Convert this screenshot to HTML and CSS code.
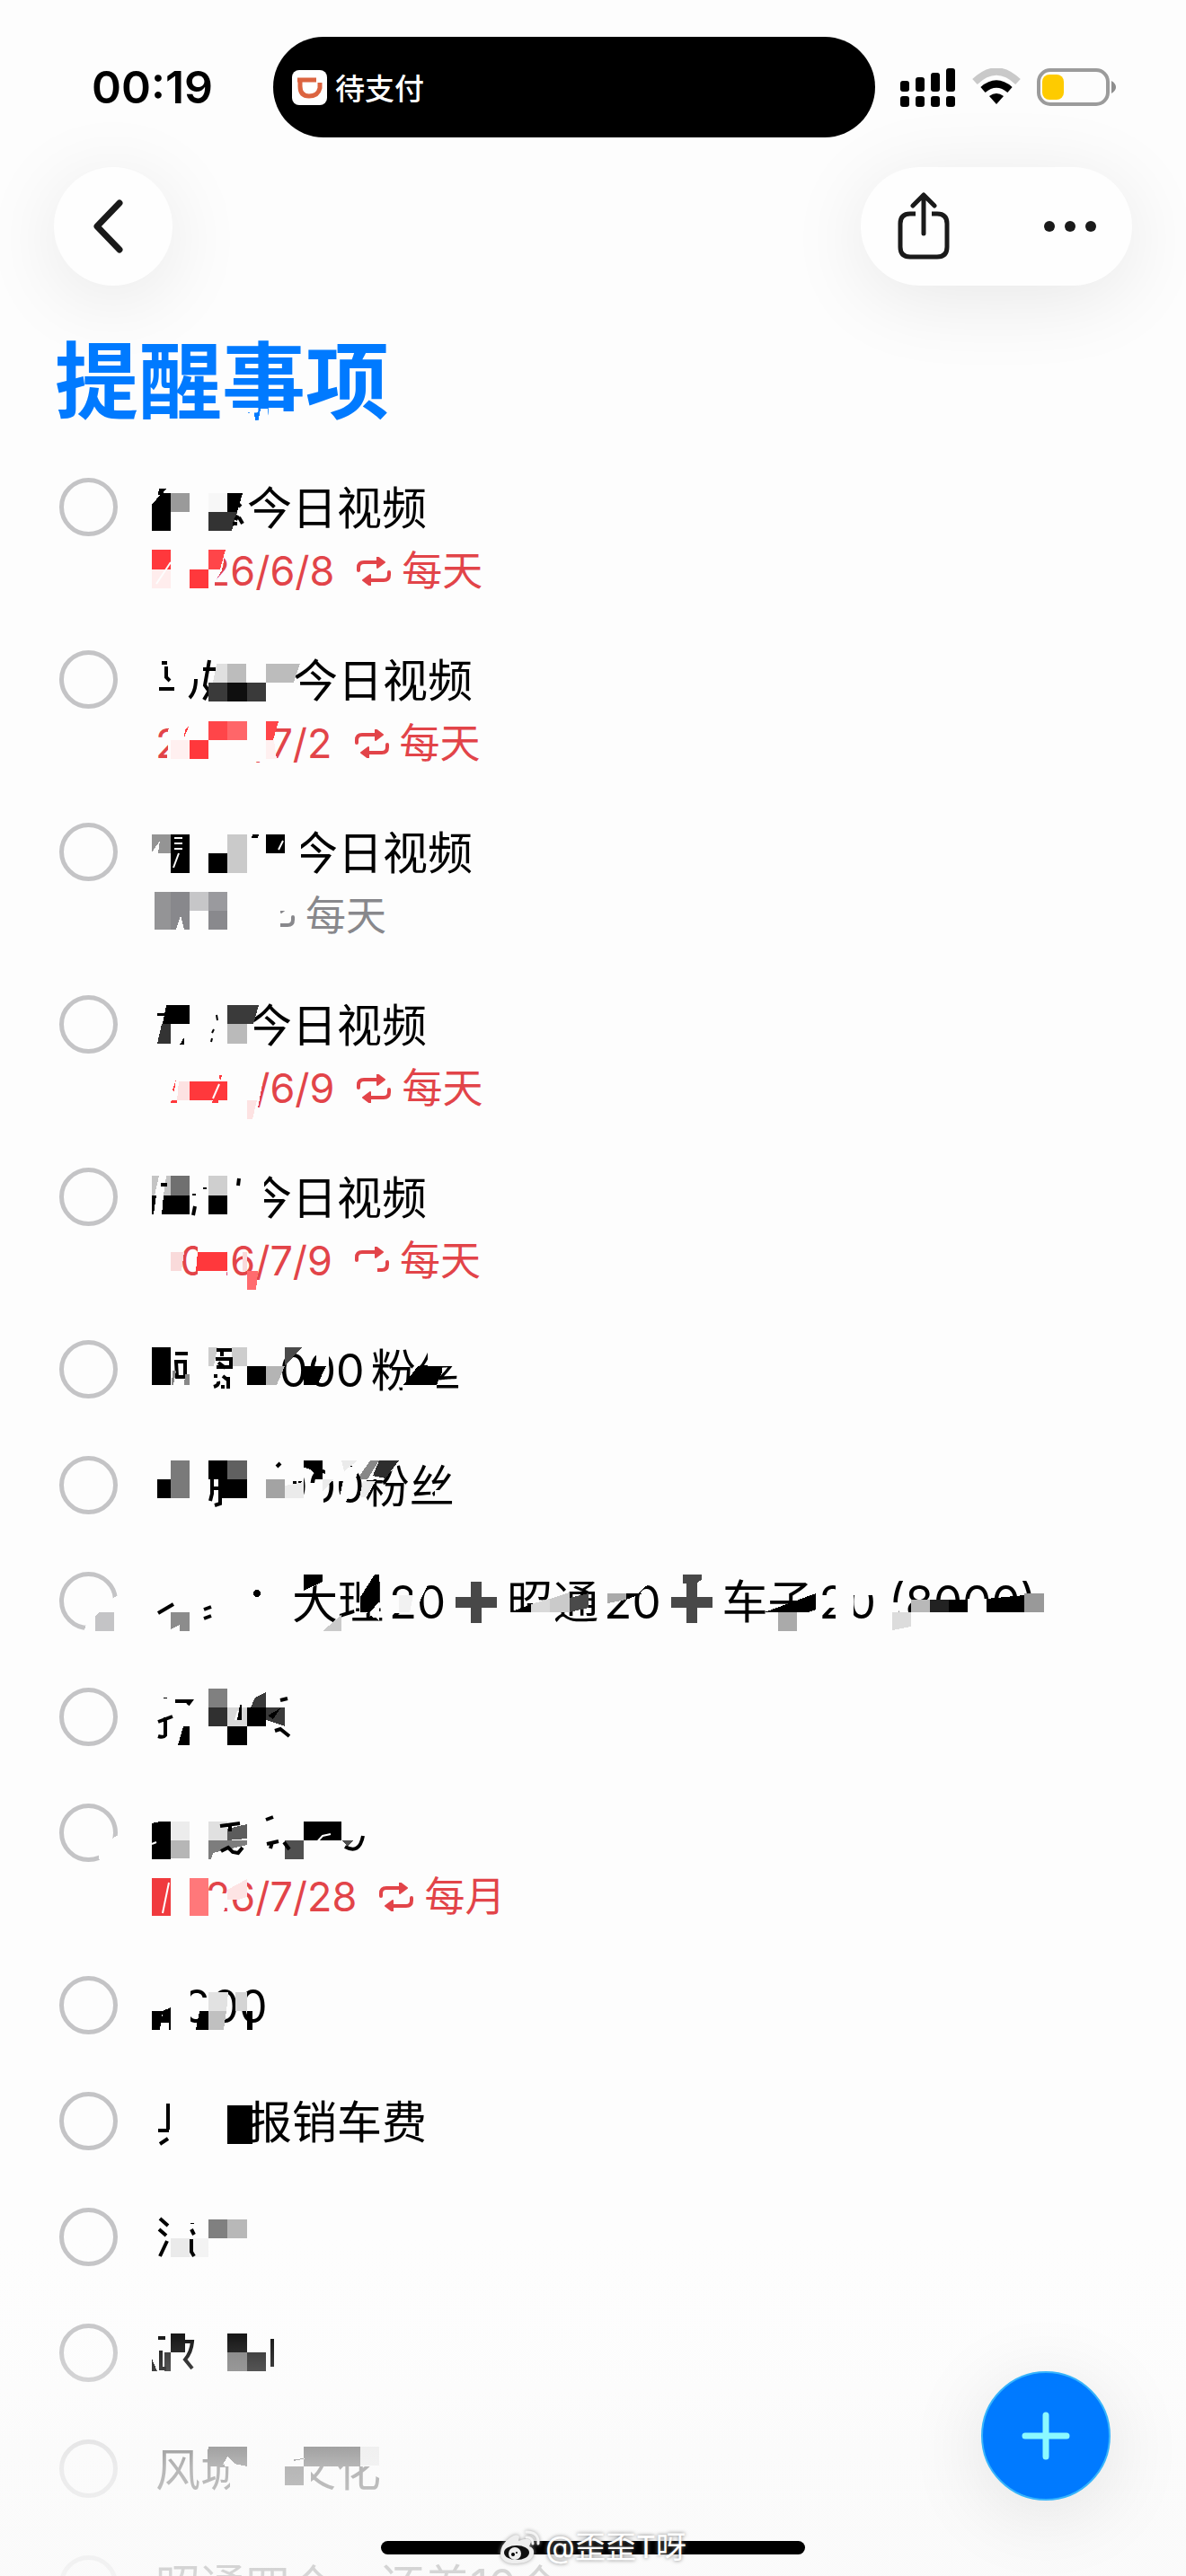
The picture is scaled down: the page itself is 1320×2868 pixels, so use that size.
FILE: index.html
```html
<!DOCTYPE html>
<html lang="zh-CN">
<head>
  <meta charset="UTF-8" />
  <meta name="viewport" content="width=device-width, initial-scale=1.0" />
  <title>提醒事项</title>
  <link rel="stylesheet" href="styles.css">
</head>
<body>
  <svg class="defs" width="0" height="0" aria-hidden="true">
    <symbol id="repeat" viewBox="0 0 38 32">
      <path d="M2 15v-3q0-6 6-6h17M36 17v3q0 6-6 6H13" fill="none" stroke="currentColor" stroke-width="4" stroke-linecap="round"/>
      <path d="M23 0l8 6-8 6zM15 20l-8 6 8 6z" fill="currentColor" stroke="currentColor" stroke-width="2" stroke-linejoin="round"/>
    </symbol>
    <symbol id="plus" viewBox="0 0 56 48">
      <path d="M28 1v46M5 24h46" fill="none" stroke="#484848" stroke-width="12"/>
    </symbol>
  </svg>

  <div class="screen">
    <header class="status">
      <time class="clock">00:19</time>
      <div class="island">
        <svg class="app-icon" viewBox="0 0 39 39">
          <rect width="39" height="39" rx="8" fill="#fff"/>
          <path d="M6 11h21M9 11v7q0 11 10 11t12-9v-6" fill="none" stroke="#dc6440" stroke-width="5"/>
        </svg>
        <span>待支付</span>
      </div>
      <div class="signals">
        <svg width="62" height="44" viewBox="0 0 62 44">
          <g>
            <rect y="15" width="10" height="12" rx="3"/><rect x="17" y="11" width="10" height="16" rx="3"/>
            <rect x="34" y="6" width="10" height="21" rx="3"/><rect x="51" y="1" width="10" height="26" rx="3"/>
            <rect y="32" width="10" height="12" rx="3"/><rect x="17" y="32" width="10" height="12" rx="3"/>
            <rect x="34" y="32" width="10" height="12" rx="3"/><rect x="51" y="32" width="10" height="12" rx="3"/>
          </g>
        </svg>
        <svg width="54" height="42" viewBox="0 0 54 42">
          <path d="M3 15q24-23 48 0" fill="none" stroke="#c9c9c9" stroke-width="8"/>
          <path d="M12 24q15-13 30 0" fill="none" stroke="#000" stroke-width="8"/>
          <path d="M19 31q8-6 16 0l-8 9z"/>
        </svg>
        <svg width="90" height="42" viewBox="0 0 90 42">
          <rect x="2" y="2" width="77" height="38" rx="13" fill="none" stroke="#9b9b9b" stroke-width="4"/>
          <rect x="6" y="7" width="24" height="28" rx="8" fill="#fecb00"/>
          <path d="M83 14q5 3 5 7t-5 7z" fill="#8e8e8e"/>
        </svg>
      </div>
    </header>

    <nav class="toolbar">
      <button class="glass back" aria-label="返回">
        <svg width="40" height="64" viewBox="0 0 40 64"><path d="M32 6L7 32l25 26" fill="none" stroke="#1a1a1a" stroke-width="7" stroke-linecap="round" stroke-linejoin="round"/></svg>
      </button>
      <div class="glass actions">
        <button aria-label="共享">
          <svg width="60" height="76" viewBox="0 0 60 76">
            <path d="M21 24h-6q-11 0-11 11v26q0 11 11 11h30q11 0 11-11V35q0-11-11-11h-6" fill="none" stroke="#1a1a1a" stroke-width="5"/>
            <path d="M30 46V4M18 15L30 3l12 12" fill="none" stroke="#1a1a1a" stroke-width="5" stroke-linecap="round" stroke-linejoin="round"/>
          </svg>
        </button>
        <button aria-label="更多">
          <svg width="60" height="14" viewBox="0 0 60 14" fill="#1a1a1a"><circle cx="7" cy="7" r="6"/><circle cx="30" cy="7" r="6"/><circle cx="53" cy="7" r="6"/></svg>
        </button>
      </div>
    </nav>

    <h1>提醒事项
      <svg class="mask"><g class="c"><path d="M190 84h26l-1 5 7-2v3l3 16h-35zM229 84h8v22h-12z"/></g></svg>
    </h1>

    <ul class="list">
      <li class="item">
        <input type="checkbox" id="r1">
        <div class="body">
          <label class="title" for="r1"><span class="hide2"></span>今日视频</label>
          <p class="due"><span>2026/6/8</span><svg class="repeat"><use href="#repeat"/></svg><span>每天</span></p>
        </div>
        <svg class="mask">
          <path class="c" d="M165 108h87l-5 27-8 13v12h-74z"/>
          <path d="M169 62l11-13h10v42h-21zM177 44h8l-5 7h-4zM253 49h17l-6 21h-11z"/>
          <path fill="#9a9a9a" d="M190 49h21v21h-21z"/><path fill="#f7f7f7" d="M232 49h21v21h-21z"/>
          <path fill="#333" d="M232 70h32l-6 21h-26z"/>
          <path class="s" d="M264 60l4 4M265 74l-3 5M266 76l4 7M259 83h5"/>
          <path fill="#ff383c" d="M169 112h21v22h-21zM211 134h21v21h-21z"/><path fill="#ffeded" d="M169 134h21v21h-21z"/>
          <path fill="#ff4549" d="M232 112h19l-6 22h-13z"/><path class="w" d="M174 150l16-24"/>
        </svg>
      </li>
      <li class="item">
        <input type="checkbox" id="r2">
        <div class="body">
          <label class="title" for="r2"><span class="hide3"></span>今日视频</label>
          <p class="due"><span>2026/7/2</span><svg class="repeat"><use href="#repeat"/></svg><span>每天</span></p>
        </div>
        <svg class="mask">
          <path class="c" d="M188 108h116l-4 48H186z"/>
          <path class="s" d="M177 75h17M180 46h6M185 50v12l4 4M218 64q0 14-7 21M233 43l-5 28 10 14M226 53h14M236 72l-9 15"/>
          <path fill="#e0e0e0" d="M241 47h12v21h-16z"/><path fill="#bcbcbc" d="M253 47h21v21h-21zM296 47h38l-7 21h-31z"/>
          <path fill="#3a3a3a" d="M232 68h64v21h-64z"/><path fill="#0f0f0f" d="M253 68h22v21h-22z"/>
          <path fill="#fff0f0" d="M190 132h21v21h-21zM296 132h9l3 21h-12z"/><path fill="#ff383c" d="M211 132h21v21h-21zM206 120l4-3-5 12z"/>
          <path fill="#ff4549" d="M232 111h21v21h-21zM296 111h14l-6 21h-8z"/><path fill="#ff6669" d="M253 111h22v21h-22z"/>
        </svg>
      </li>
      <li class="item">
        <input type="checkbox" id="r3">
        <div class="body">
          <label class="title" for="r3"><span class="hide3"></span>今日视频</label>
          <p class="due grey"><span class="hide-date"></span><svg class="repeat"><use href="#repeat"/></svg><span>每天</span></p>
        </div>
        <svg class="mask">
          <path class="c" d="M320 40h15v50h-15z"/>
          <path fill="#949494" d="M169 45h21v21h-14l2-14-9 13z"/>
          <path d="M190 45h21v43h-21zM281 45h7l-1 4h-7zM296 45h21v21h-21zM232 66h21v22h-21z"/>
          <path fill="#cacaca" d="M253 45h22v43h-22z"/>
          <path class="w" d="M194 49h9M194 55h9M194 61h9M193 82l6-16M310 62l5-10"/>
          <path class="c" d="M284 108h28v46h-28zM308 108h18v22h-18zM308 142h3v12h-3z"/>
          <path fill="#949496" d="M172 109h18v42h-18z"/><path fill="#88888c" d="M190 109h21v42h-21z"/>
          <path fill="#c6c6c8" d="M211 109h21v21h-21z"/><path fill="#9a9a9e" d="M232 109h21v21h-21z"/><path fill="#89898d" d="M232 130h21v21h-21z"/>
          <path class="c" d="M201 135l4 16h-9z"/>
        </svg>
      </li>
      <li class="item">
        <input type="checkbox" id="r4">
        <div class="body">
          <label class="title" for="r4"><span class="hide2"></span>今日视频</label>
          <p class="due"><span>2026/6/9</span><svg class="repeat"><use href="#repeat"/></svg><span>每天</span></p>
        </div>
        <svg class="mask">
          <path class="c" d="M165 108h131l-9 50H165z"/>
          <path d="M185 43h26v21h-30zM175 52h9v3h-9zM200 87l5-8v8z"/>
          <path fill="#333" d="M180 64h10v22h-15z"/><path class="s thin" d="M241 54l1 6M238 70l-2 4M236 80l-1 4"/>
          <path fill="#3a3a3a" d="M253 43h35l-6 21h-29z"/><path fill="#bababa" d="M253 64h22v22h-22z"/>
          <path fill="#ff383c" d="M191 149h6v3h-7zM192 138l4-13-2 14zM211 128h42v21h-42zM244 121h3l-2 7zM237 149h6v3h-7z"/>
          <path class="w" d="M237 147l7-16"/>
          <path fill="#fde2e2" d="M199 128h12v21h-14zM275 149h11l-5 21h-6z"/>
        </svg>
      </li>
      <li class="item">
        <input type="checkbox" id="r5">
        <div class="body">
          <label class="title" for="r5"><span class="hide2"></span>今日视频</label>
          <p class="due"><span>2026/7/9</span><svg class="repeat"><use href="#repeat"/></svg><span>每天</span></p>
        </div>
        <svg class="mask">
          <path class="c" d="M272 38h22v50h-22zM165 108h37v50h-37zM220 108h32v50h-32zM390 138h30v18h-30z"/>
          <path fill="#c4c4c4" d="M169 41h8l-5 22h-3zM185 41h5v22h-8z"/><path fill="#707070" d="M190 41h21v22h-21z"/>
          <path fill="#cfcfcf" d="M232 41h21v22h-21z"/>
          <path d="M182 63h29v21h-31zM169 63h5l-3 21h-2zM232 63h21v21h-21zM179 49h7v4h-7z"/>
          <path class="s" d="M216 61v2M217 75l-2 10M228 54v2M266 44l-1 8"/>
          <path fill="#f9dada" d="M190 126h15l-3 21h-12zM270 126h5v21h-5z"/><path fill="#ff383c" d="M220 126h33v21h-35z"/>
          <path fill="#ff6b6e" d="M275 147h12l-2 21h-10z"/>
        </svg>
      </li>
      <li class="item">
        <input type="checkbox" id="r6">
        <div class="body">
          <label class="title" for="r6"><span class="hide-num"></span><span class="num">000</span>粉丝</label>
        </div>
        <svg class="mask">
          <path class="c" d="M476 36h40v25h-40zM448 82h38v12h-38zM352 38h14v24h-14z"/>
          <path d="M169 40h21v42h-21zM275 61h21v21h-21zM338 61h25l-10 21h-15zM465 61h27v7l-6 14h-37z"/>
          <path class="s" d="M195 47h14M196 56h10v17h-9z"/><path fill="#888" d="M192 66h4l-3 16h-2zM206 70h5v12h-6z"/>
          <path fill="#cdcdcd" d="M232 40h10l-4 21h-6zM258 40h17v21h-17z"/>
          <path class="s" d="M241 43h17M247 43v7M240 53h17v9h-16M243 57l8 6M240 70v4M238 84q6-2 5-6M248 72l5 4M254 73v13M246 84h4"/>
          <path fill="#b4b4b4" d="M296 61h21l-9 21h-12z"/><path fill="#4a4a4a" d="M317 40h19l-19 21z"/>
        </svg>
      </li>
      <li class="item">
        <input type="checkbox" id="r7">
        <div class="body">
          <label class="title" for="r7"><span class="hide-num"></span>000粉丝</label>
        </div>
        <svg class="mask">
          <path class="c" d="M308 34h30v56h-30zM345 62h15v28h-15zM359 36h45l-20 50h-8l6-26h-18zM400 36h50l-24 22h-24zM484 70h18v10h-18z"/>
          <path d="M175 58h15v21h-15zM232 37h21v21h-21zM243 58h32v21h-32zM338 37h21v21h-8q0-12-13-13zM386 38l6 6h-10z"/>
          <path fill="#7a7a7a" d="M190 37h21v42h-21z"/><path fill="#606060" d="M253 37h22v21h-22z"/>
          <path class="s" d="M236 58v16l-2 8M245 65v20l-6 2M235 68h8M308 44l4-4M328 60v8M334 60v10"/>
          <path fill="#a3a3a3" d="M296 58h21v21h-21z"/><path fill="#ebebeb" d="M317 65l21-4v18h-21zM359 58h12l-12 14zM380 37h18l-15 12zM404 60h14l-10 18h-8z"/>
          <path fill="#888" d="M422 37h-10l-11 16v5h8z"/><path fill="#2e2e2e" d="M422 37h22l-15 20-14-3z"/>
        </svg>
      </li>
      <li class="item">
        <input type="checkbox" id="r8">
        <div class="body">
          <label class="title parts" for="r8"><span class="hide3"></span><span>大理</span><span>20</span><svg class="plus"><use href="#plus"/></svg><span>昭通</span><span>20</span><svg class="plus"><use href="#plus"/></svg><span>车子</span><span>20</span><span class="sum">(8000)</span></label>
        </div>
        <svg class="mask">
          <path class="c" d="M126 61l12-6v50H92l3-12z"/>
          <path class="c" d="M400 36h22v50l-10-9-12 2zM326 36h34v8l-30 12zM434 58h26v20h-26zM459 40h20l-14 30-6-10zM568 77h50v12h-50zM672 40h56l-18 16h-38zM930 40h20v50h-20zM910 58h20v14h-20zM950 38h26v20h-26zM1010 77h150v16h-150zM1077 62h21v30h-21zM980 66h20v28h-20z"/>
          <path fill="#c4c4c6" d="M110 77h17v21h-21V82z"/><path fill="#8c8c8c" d="M190 77h21v21h-11v-7l-10 5z"/>
          <path class="s" d="M176 78l17-10M227 74l8-3M227 84l8-3"/><circle cx="286" cy="56" r="4"/>
          <path d="M338 35h21v8l-21 10zM422 35v30l-10 12h-11V60l16-25zM405 86h14l-6-5zM568 77l23-9v9zM697 56h18l-18 7zM851 77l57-21v18l-8 3z"/>
          <path fill="#cacaca" d="M380 80v18h-21zM612 62l22-7v22h-22z"/><path fill="#d9d9d9" d="M591 68l21-6v15h-21z"/>
          <path fill="#4a4a4a" d="M634 61l21-5v16l-21 5z"/><path fill="#aaa" d="M676 56h21v7l-21 4zM866 77h21v21h-21z"/>
          <path fill="#484848" d="M760 35h21v6l-7 4h-14z"/><path fill="#f1f1f1" d="M444 58h16l-4 19h-12z"/>
          <path fill="#b8b8b8" d="M1014 63h21v14h-21z"/><path fill="#222" d="M1035 63h21v14h-21z"/>
          <path d="M1056 63h21v14h-21zM1098 62l42-4v19h-42z"/><path fill="#999" d="M1140 56h22v21h-22z"/><path fill="#dcdcdc" d="M993 77h21v16l-21 4z"/>
        </svg>
      </li>
      <li class="item">
        <input type="checkbox" id="r9" aria-label="提醒事项">
        <div class="body"></div>
        <svg class="mask">
          <path fill="gray" d="M232 33h21v21h-21z"/><path fill="#303030" d="M232 54h21v21h-21z"/><path fill="#d8d8d8" d="M253 54h22v21h-22z"/>
          <path fill="#3a3a3a" d="M284 43l12-6v17h-17zM296 54h21v21l-21-7z"/>
          <path d="M275 54h21v21h-21zM253 75h22v21h-22zM204 75h7v21h-13z"/>
          <path class="s" d="M195 47h17l-3 4M184 43v1M176 70l16-6M184 65v20q-2 3-8 1M312 46l8-2M306 80l6-2 10 8"/>
          <path d="M267 51h2v17h-5zM298 63l14-8-8 12z"/><path class="w" d="M262 68l3-10"/>
        </svg>
      </li>
      <li class="item">
        <input type="checkbox" id="r10" aria-label="提醒事项">
        <div class="body">
          <div class="title"></div>
          <p class="due"><span>2026/7/28</span><svg class="repeat"><use href="#repeat"/></svg><span>每月</span></p>
        </div>
        <svg class="mask">
          <path class="c" d="M140 64l-14 6-16 20 2 14h28z"/>
          <path class="c" d="M165 108h67v50h-67zM232 132h22l-6 26h-16zM254 108h24l-6 24-18 8zM280 108h14l-12 22z"/>
          <path d="M169 54l9-2h12v42h-21zM338 52h42v21h-42z"/><path class="w" d="M169 77l5-2M350 78l9-10 9-2"/>
          <path fill="#ececec" d="M190 52h21v21h-21z"/><path fill="#b6b6b6" d="M190 73h21v20h-21z"/><path fill="#e0e0e0" d="M232 52h21v21h-21z"/>
          <path fill="#5c5c5c" d="M253 60l22-5v16l-22 2z"/><path fill="#7d7d7d" d="M232 73h43v5l-38 9-2 7h-3z"/>
          <path fill="#505050" d="M317 73h21v21h-21zM380 73h14l-7 6z"/>
          <path class="s" d="M245 57l22-3M256 57v6M246 85l8-4 5 5 6 1 5-6M296 50l8-3M297 77l13-3M303 75l-2 7M316 75l6 8M384 80q16 9 20-12"/>
          <path fill="#f03a3e" d="M169 115h21v42h-21z"/><path class="w" d="M181 154l7-34"/>
          <path fill="#ff787a" d="M211 115h21v42h-21z"/><path fill="#fde4e4" d="M253 128l22-12v20l-10 3h-12z"/>
        </svg>
      </li>
      <li class="item">
        <input type="checkbox" id="r11">
        <div class="body"><label class="title" for="r11">2300</label></div>
        <svg class="mask">
          <path class="c" d="M168 42h22v25h-22zM190 42h22v50h-22zM208 56h26v17h-26z"/>
          <path d="M169 71h12l-3 21h-9zM222 71h10v21h-14zM275 71h6v21h-6zM179 72l11-5v25h-2v-12h-5z"/>
          <path fill="#e2e2e2" d="M232 50h22l-2 21h-20z"/><path fill="#c0c0c0" d="M232 71h20l-3 21h-17z"/><path fill="#d4d4d4" d="M262 50h13v21h-13z"/>
        </svg>
      </li>
      <li class="item">
        <input type="checkbox" id="r12">
        <div class="body"><label class="title" for="r12"><span class="hide2"></span>报销车费</label></div>
        <svg class="mask">
          <path d="M253 47h28v43h-28z"/><path class="s" d="M187 45v29M176 75h12M178 90l9-6"/>
        </svg>
      </li>
      <li class="item">
        <input type="checkbox" id="r13" aria-label="提醒事项">
        <div class="body"></div>
        <svg class="mask">
          <path fill="gray" d="M232 45h21v21h-21z"/><path fill="#b8b8b8" d="M253 45h22v21h-22z"/>
          <path fill="#eaeaea" d="M190 66h21v21h-21z"/><path fill="#f3f3f3" d="M211 66h21v21h-21z"/>
          <path class="s" d="M178 44l9 8M177 56l8 7M178 86l8-17M214 49v1M213 56l3 6M213 67v14l3 5"/>
        </svg>
      </li>
      <li class="item">
        <input type="checkbox" id="r14" aria-label="提醒事项">
        <div class="body"></div>
        <svg class="mask">
          <path d="M190 43h16v21h-16zM253 43h22v21h-22zM169 71l6 14h-6z"/><path fill="#777" d="M253 64h22v21h-22z"/><path fill="#1c1c1c" d="M275 64h21v21h-21zM183 64h7v21h-7z"/>
          <path class="s" d="M176 48h8M179 62v20h6M206 52h8q-1 12-8 20l8 10M303 49v31"/>
        </svg>
      </li>
      <li class="item">
        <input type="checkbox" id="r15">
        <div class="body"><label class="title" for="r15">风城<span class="hide1"></span>文化</label></div>
        <svg class="mask">
          <path class="c" d="M250 38h26v24h-26zM256 62h20v28h-20zM326 38h102v24H326zM324 62h22v28h-22z"/>
          <path d="M232 40h43v22l-14-3-8-8-6 11h-15zM338 40h63v22h-63zM317 62h21v21h-21zM327 56l14-3-14 1z"/><path fill="#ddd" d="M401 40h21v21h-21z"/>
        </svg>
      </li>
      <li class="item">
        <input type="checkbox" id="r16">
        <div class="body"><label class="title" for="r16">昭通四个，还差10个</label></div>
      </li>
    </ul>

    <div class="fade"></div>
    <button class="fab" aria-label="新提醒事项">
      <svg width="54" height="54" viewBox="0 0 54 54"><path d="M27 4v46M4 27h46" stroke="#8bf9ff" stroke-width="7" stroke-linecap="round"/></svg>
    </button>
    <div class="home"></div>
    <div class="watermark">
      <svg width="46" height="40" viewBox="0 0 46 40">
        <path d="M1 27Q1 17 12 9q7-5 10-1l-1 5q13-5 14 1l-2 5q6 2 5 8-2 10-18 11Q2 39 1 27z" fill="#eee"/>
        <ellipse cx="19" cy="26" rx="14" ry="8" fill="#111"/><circle cx="17" cy="27" r="7" fill="#eee"/><circle cx="15" cy="28" r="2"/><circle cx="19" cy="26" r="1"/>
        <path d="M30 3q14 0 13 13M30 9q7 0 7 7" fill="none" stroke="#f4f4f4" stroke-width="3" stroke-linecap="round"/>
      </svg>
      <span>@歪歪T呀</span>
    </div>
  </div>
</body>
</html>
```
FILE: styles.css
```css
* {
  box-sizing: border-box;
}

body {
  margin: 0;
  font-family: Inter, "Noto Sans CJK SC", sans-serif;
  background-color: #fdfdfd;
  color: #000;
}

button {
  border: none;
  padding: 0;
  background: none;
  display: flex;
  align-items: center;
  justify-content: center;
  cursor: pointer;
}

.defs {
  position: absolute;
}

.screen {
  position: relative;
  height: 100vh;
  overflow: hidden;
}

/* status bar */
.status {
  display: grid;
  grid-template-columns: 152fr 335fr 173fr;
  align-items: center;
  padding-top: 41px;
}

.clock {
  padding-left: 102px;
  font-size: 50px;
  line-height: 60px;
  font-weight: 600;
}

.island {
  height: 112px;
  border-radius: 56px;
  background-color: #000;
  color: #fff;
  display: flex;
  align-items: center;
  gap: 9px;
  padding-left: 21px;
  font-size: 33px;
  font-weight: 500;
}

.app-icon {
  width: 39px;
  height: 39px;
}

.signals {
  display: flex;
  align-items: center;
  gap: 18px;
  padding-left: 28px;
}

/* toolbar */
.toolbar {
  display: flex;
  justify-content: space-between;
  padding: 33px 60px 0;
}

.glass {
  height: 132px;
  border-radius: 66px;
  background-color: #fefefe;
  box-shadow: 0 14px 90px rgba(0, 0, 0, 0.09);
}

.back {
  width: 132px;
  padding-right: 10px;
}

.actions {
  display: flex;
  width: 302px;
}

.actions button {
  flex: 1;
}

.actions button:first-child {
  padding-right: 14px;
}

.actions button:last-child {
  padding-left: 10px;
}

h1 {
  position: relative;
  margin: 53px 61px 21px;
  font-size: 93px;
  line-height: 108px;
  font-weight: 700;
  color: #007aff;
}

/* list */
.list {
  list-style: none;
  margin: 0;
  padding: 0;
}

.item {
  position: relative;
  display: flex;
  align-items: flex-start;
  gap: 42px;
  min-height: 129px;
  padding: 28px 60px 0 66px;
}

.item input {
  appearance: none;
  flex: none;
  width: 65px;
  height: 65px;
  margin: 4px 0 0;
  border: 5px solid #c4c4c6;
  border-radius: 50%;
}

.body {
  flex: 1;
  padding: 2px 0 27px;
}

.title {
  display: block;
  min-height: 72px;
  font-size: 50px;
  line-height: 72px;
  white-space: nowrap;
}

.parts {
  display: flex;
  align-items: center;
  gap: 6px;
  font-size: 51px;
}

.parts .hide3 {
  width: 146px;
}

.num {
  margin-right: 7px;
}

.sum {
  margin-left: 8px;
}

.plus {
  width: 56px;
  height: 48px;
}

.due {
  display: flex;
  align-items: center;
  margin: 4px 0 -1px;
  font-size: 45px;
  line-height: 60px;
  color: #e24449;
}

.due.grey {
  color: #88888c;
}

.repeat {
  width: 38px;
  height: 32px;
  margin: 0 12px 0 25px;
}

/* blanked-out parts of a line */
.hide1,
.hide2,
.hide3,
.hide-num,
.hide-date {
  display: inline-block;
}

.hide1 {
  width: 51px;
}

.hide2 {
  width: 102px;
}

.hide3 {
  width: 153px;
}

.hide-num {
  width: 138px;
}

.hide-date {
  width: 92px;
}

.mask {
  position: absolute;
  left: 0;
  top: 0;
  width: 100%;
  height: 100%;
  pointer-events: none;
  shape-rendering: crispEdges;
}

.mask .c {
  fill: #fdfdfd;
}

.mask .s {
  fill: none;
  stroke: #000;
  stroke-width: 4;
  shape-rendering: auto;
}

.mask .thin {
  stroke-width: 2;
}

.mask .w {
  fill: none;
  stroke: #fdfdfd;
  stroke-width: 2;
  shape-rendering: auto;
}

/* bottom overlay */
.fade {
  position: absolute;
  left: 0;
  right: 0;
  bottom: 0;
  height: 380px;
  pointer-events: none;
  background: linear-gradient(rgba(250, 250, 250, 0), rgba(250, 250, 250, 0.1) 30%, rgba(250, 250, 250, 0.3) 43%, rgba(250, 250, 250, 0.6) 59%, rgba(250, 250, 250, 0.73) 68%, rgba(250, 250, 250, 0.86));
}

.fab {
  position: absolute;
  right: 84px;
  bottom: 84px;
  width: 144px;
  height: 144px;
  border: 2px solid #35b4fc;
  border-radius: 50%;
  background-color: #007aff;
  box-shadow: 0 14px 90px rgba(0, 0, 0, 0.1);
}

.home {
  position: absolute;
  left: 0;
  right: 0;
  bottom: 24px;
  width: 472px;
  height: 15px;
  margin: 0 auto;
  border-radius: 8px;
  background-color: #000;
}

.watermark {
  position: absolute;
  left: 0;
  right: 0;
  bottom: 10px;
  display: flex;
  align-items: center;
  justify-content: center;
  gap: 5px;
  font-size: 34px;
  line-height: 44px;
  color: #fff;
  text-shadow: 0 0 4px #777;
}

.watermark svg {
  filter: drop-shadow(0 0 2px #999);
}
```
